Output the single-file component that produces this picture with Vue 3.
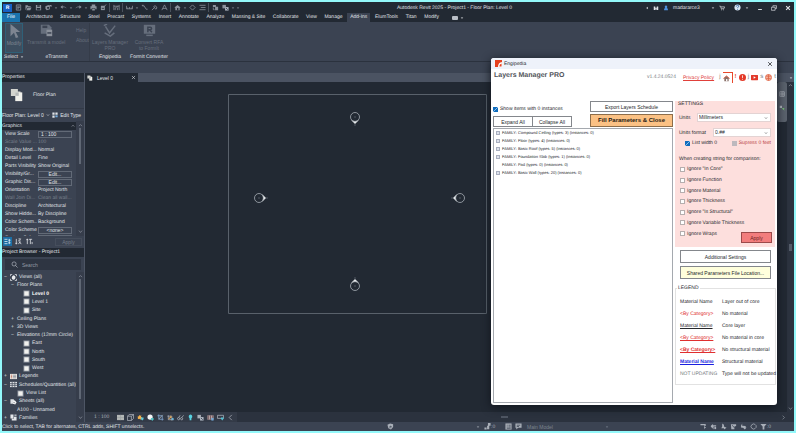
<script setup>
import { h, ref } from 'vue'

// Each glyph is a list of [path, fill, stroke] on a 16 x 16 grid.
const C = 'currentColor'
const N = 'none'
const glyphs = {
  recent: [['M3 2h10v12H3z', N, C], ['M5 5h6M5 8h6M5 11h4', N, C]],
  open: [['M1 3h5l2 2h5v2H5l-3 6H1z', C, N], ['M6 8h9l-3 6H3z', C, N]],
  save: [['M2 2h11l1 1v11H2z', C, N], ['M5 3h6v3H5zM4 9h8v4H4z', '#222933', N]],
  sync: [['M1 5l7-3 3 3v7l-7 2-3-3z', C, N], ['M10 2h5v5l-2-2-3 2z', C, N], ['M5 7h4v4H5z', '#222933', N]],
  undo: [['M6 3L1 7l5 4V8c4-1 7 0 9 3-1-5-5-6-9-5z', C, N]],
  redo: [['M10 3l5 4-5 4V8c-4-1-7 0-9 3 1-5 5-6 9-5z', C, N]],
  print: [['M4 1h8v4H4zM1 5h14v7h-3V9H4v3H1zM5 10h6v5H5z', C, N]],
  mark: [['M2 4h9v10H2z', C, N], ['M8 8l6-7', N, C], ['M4 10h5', N, '#222933']],
  measure: [['M2 2v12M14 2v12M2 5h12M5 9l6-4M5 9v5M10 8v6', N, C]],
  dim: [['M1 4v7h14V4M4 11V8M8 11V7M12 11V8', N, C]],
  line: [['M2 3h4l6 9h3M3 3l2 3', N, C]],
  tag: [['M2 14L8 8M6 6a4 4 0 1 1 5 6z', N, C]],
  text: [['M2 14L8 2l6 12M4 10h8', N, C]],
  house3d: [['M1 8l7-6 7 6-2 1v5H3V9z', C, N], ['M7 9h3v5H7z', '#222933', N]],
  diamond: [['M8 2l6 6-6 6-6-6z', N, C]],
  lines: [['M1 3h14M4 8h11M1 13h14', N, C]],
  close: [['M3 3l10 10M13 3L3 13', N, C]],
  windows: [['M2 2h7v5H2zM7 6h7v8H7z', C, N], ['M3 8v5h3', N, C]],
  caret: [['M3 6h10l-5 5z', C, N]],
  left: [['M11 3v10L5 8z', C, N]],
  chevron: [['M3 5l5 6 5-6', N, C]],
  up: [['M3 10l5-5 5 5', N, C]],
  right: [['M5 2l6 6-6 6', N, C]],
  back: [['M11 2L5 8l6 6', N, C]],
  binoc: [['M2 4h4v3h4V4h4v9h-5V9H7v4H2z', C, N]],
  user: [['M8 1a4 4 0 0 1 2 7l3 2v4H3v-4l3-2a4 4 0 0 1 2-7z', '#4d91dd', N]],
  cart: [['M1 3h3l2 7h7l2-5H5', N, C], ['M6 12h2v2H6zM11 12h2v2h-2z', C, N]],
  help: [['M8 1a7 7 0 1 1 0 14A7 7 0 0 1 8 1z', '#dbe8f5', N], ['M5 6c0-4 6-4 6-1 0 2-3 2-3 4M8 11v2', N, '#245b9c']],
  min: [['M3 12h10', N, C]],
  restore: [['M5 5V2h10v7h-4M1 6h10v8H1z', N, C]],
  cursor: [['M4 0v14l4-4 2 6 3-1-3-6h5z', C, N]],
  transmit: [['M1 1h10l3 3v8H1z', C, N], ['M3 2h6v3H3z', '#3b4352', N], ['M8 7h7v8H8z', '#8b919b', N], ['M9 11h5', N, '#3b4352']],
  layers: [['M3 3l5 8 7-9', N, C], ['M1 2l4-2M2 11l7 4 5-4', N, C]],
  formit: [['M1 1h14v11H1z', C, N], ['M6 10V4h3c2 0 2 3 0 3H6M8 7l3 3', N, '#3b4352'], ['M4 14h8', N, C]],
  plan: [['M1 1h8v3h3v8H9V9H1z', '#d3d4cf', N], ['M6 5h8v10H6z', '#f0f0eb', N], ['M6 5h4v4H6z', '#b5b8b8', N]],
  edittype: [['M1 1h6v6H1zM9 1h6v6H9zM1 9h6v6H1z', C, N], ['M9 9h6v5H9z', '#75aee0', N]],
  filter: [['M1 3h7M1 8h7M1 13h7', N, '#e8f3fb'], ['M10 5h5M10 11h5M12 2v12', N, '#e8f3fb']],
  sortaz: [['M3 2v12M1 11l2 3 2-3M8 2h5L8 7h5M8 14l3-5 3 5', N, C]],
  sorttype: [['M3 14V2M1 5l2-3 2 3M7 3h7M10 3v11M14 9v5', N, C]],
  search: [['M7 2a4.500 4.500 0 1 1 0 9.500A4.500 4.500 0 0 1 7 2zM10 10l5 5', N, C]],
  views: [['M1 5V1h4M11 1h4v4M15 11v4h-4M5 15H1v-4', N, C], ['M8 3a5 5 0 1 1-1 10C3 12 3 5 8 3z', '#e9ebee', N]],
  view: [['M1 1h14v14H1z', '#8a919b', N], ['M3 3h10v10H3z', '#f1f1ee', N]],
  legends: [['M0 2h16v12H0z', '#e7e4df', N], ['M2 5h3M2 8h3M2 11h3', N, '#bd6c55'], ['M7 5h7M7 8h7M7 11h7', N, '#8a919b']],
  schedule: [['M0 2h16v12H0z', '#dfe2e6', N], ['M0 6h16M0 10h16M5 2v12M11 2v12', N, '#4e5663']],
  sheets: [['M1 3h7l3 3v7H1z', '#dfe2e6', N], ['M7 7l5-1 3 4-3 5-5-2z', '#f5f5f5', N], ['M8 9l3 3', N, '#4e5663']],
  families: [['M1 1h7v9H1zM9 6h6v9H4v-4h5z', '#e3e6ea', N], ['M10 1h5v4h-5z', '#aab0b9', N]],
  scale: [['M0 2h16v12H0z', '#b3b7b6', N], ['M0 8h16M8 2v12', N, '#a0a5a6']],
  box: [['M1 5h9v10H1zM1 5l4-4h10L10 5M15 1v9l-5 5', N, C]],
  sun: [['M5 2l2 2 3-1-1 3 3 2-3 2-1 3-3-2-3 1V8L1 6l3-1z', '#f3b14d', N], ['M9 8h6v4l-3 3-3-3z', '#62c7d8', N]],
  shadow: [['M7 1a6 6 0 1 1 0 12A6 6 0 0 1 7 1z', '#f3f5f7', N], ['M9 9h6v3l-3 4-3-4z', '#52c2c5', N]],
  crop: [['M4 1v11h11M1 4h11v11', N, '#80a7d1'], ['M4 12L13 2', N, C]],
  cropview: [['M3 3v10h12M1 5h10v10', N, C], ['M2 13l7-10 2 5z', '#d5a25b', N], ['M11 9h4v5h-4z', '#67b8dd', N]],
  glasses: [['M1 11c0-4 5-4 5 0s-5 2-5 0M8 11c0-4 5-4 5 0s-5 2-5 0M4 8l3-5M11 8l4-5', N, C]],
  bulb: [['M8 1a5 5 0 0 1 2 9v4H6v-4a5 5 0 0 1 2-9z', '#58d1e0', N]],
  props: [['M1 2h8v8H1z', C, N], ['M7 7h8v8H7z', '#aeb6c1', N], ['M9 9l4 4', N, '#2e3542']],
  analytic: [['M1 3h14v10H1z', '#b6a3a3', N], ['M3 3v10M8 3v10M13 3v10', N, '#684b52'], ['M10 9h5v6h-5z', '#6fa8d8', N]],
  constraint: [['M1 3h14v7H1z', N, C], ['M9 8h6v3l-3 4-3-4z', '#53bfd2', N]],
  cube: [['M1 4l6-3 7 2v6l-5 6-6-3z', C, N], ['M7 7l4 2M7 7v5', N, '#3b4352']],
  worker: [['M9 0h6v6H9zM7 6h5v8H7zM1 10h5v5H1z', C, N]],
  panel: [['M1 1h14v14H1z', C, N], ['M4 5h2M8 5h5M4 9h2M8 9h5M4 12h9', N, '#3b4352']],
  bubble: [['M1 1h14v10H7l-4 4v-4H1z', C, N], ['M4 5h8M4 8h5', N, '#3b4352']],
  selA: [['M1 2h12v5h-3V5H1z', C, N], ['M9 7l5 4-3 1-1 3z', C, N]],
  selB: [['M2 6l5-4v3h7v3H8v7L5 11 2 9z', C, N], ['M10 9h4v5h-4z', C, N]],
  selC: [['M5 1l4 3v4l6 3-6 4v-3H3l2-4z', C, N]],
  selD: [['M2 3h12v4l-4 1v6H3z', C, N], ['M5 5l5 6', N, '#3b4352']],
  selE: [['M5 1v5l8 1v3h2l-4 5-4-4H3l-1-4z', C, N]],
  gear: [['M8 2l3 1 3 3v4l-3 3-3 1-4-2-2-4 2-4z', N, C]],
  funnel: [['M1 2h14L10 8v7H6V8z', C, N]],
  wheel: [['M2 2h12v12H2z', N, C], ['M8 2v12M2 8h12', N, C]],
  zoomnav: [['M2 2h6v6H2z', C, N], ['M8 8l6 6', N, '#6bc06e'], ['M10 8h4v4h-4z', '#78b878', N]],
  engi: [['M0 0h16v16H0z', '#e6401f', N], ['M16 5c-7 0-9 5-9 11h9z', '#ffffff', N], ['M10 15c0-4 2-6 5-7v7z', '#e6401f', N]],
  engihome: [['M1 8l7-6 7 6h-2v6H3V8z', '#8a7069', N], ['M1 8l7-6 7 6', N, '#e2553a'], ['M7 9h3v5H7z', '#fff', N]],
  info: [['M8 0a8 8 0 1 1 0 16A8 8 0 0 1 8 0z', '#e43a28', N], ['M8 3v6M8 11v2', N, '#fff']],
  tube: [['M1 2h14l1 1v10l-1 1H1l-1-1V3z', '#e23a2b', N], ['M6 5l5 3-5 3z', '#fff', N]],
  globe: [['M8 1a7 7 0 1 1 0 14A7 7 0 0 1 8 1z', '#f6b9a4', '#df6243'], ['M8 1v14M3 5h10M3 10h10', N, '#df6243']],
}
const Icon = (p) =>
  h('svg', { viewBox: '0 0 16 16', width: p.s || 8, height: p.s || 8, 'aria-hidden': 'true' },
    glyphs[p.n].map(([d, fill, stroke]) => h('path', { d, fill, stroke, 'stroke-width': p.w || 1.8 })))
Icon.props = ['n', 's', 'w']

const quick = ['recent', 'open', 'save', 'sync', 'caret', 'undo', 'caret', 'redo', 'caret', 'print', 'mark', '|', 'measure', '|', 'dim', 'caret', 'line', 'tag', 'text', '|', 'house3d', 'caret', 'diamond', 'lines', '|', 'windows', 'props', 'caret', 'caret']
const tabs = ['Architecture', 'Structure', 'Steel', 'Precast', 'Systems', 'Insert', 'Annotate', 'Analyze', 'Massing & Site', 'Collaborate', 'View', 'Manage', 'Add-Ins', 'ElumTools', 'Titan', 'Modify']

const properties = [
  ['View Scale', '1 : 100', 'field'],
  ['Scale Value ...', '100', 'off'],
  ['Display Mod...', 'Normal'],
  ['Detail Level', 'Fine'],
  ['Parts Visibility', 'Show Original'],
  ['Visibility/Gr...', 'Edit...', 'button'],
  ['Graphic Dis...', 'Edit...', 'button'],
  ['Orientation', 'Project North'],
  ['Wall Join Di...', 'Clean all wall...', 'off'],
  ['Discipline', 'Architectural'],
  ['Show Hidde...', 'By Discipline'],
  ['Color Schem...', 'Background'],
  ['Color Scheme', '<none>', 'button'],
  ['System Colo...', 'Edit...', 'button'],
]
const browser = [
  { t: 'Views (all)', l: 0, e: '−', i: 'views' },
  { t: 'Floor Plans', l: 1, e: '−' },
  { t: 'Level 0', l: 2, i: 'view', b: true },
  { t: 'Level 1', l: 2, i: 'view' },
  { t: 'Site', l: 2, i: 'view' },
  { t: 'Ceiling Plans', l: 1, e: '+' },
  { t: '3D Views', l: 1, e: '+' },
  { t: 'Elevations (12mm Circle)', l: 1, e: '−' },
  { t: 'East', l: 2, i: 'view' },
  { t: 'North', l: 2, i: 'view' },
  { t: 'South', l: 2, i: 'view' },
  { t: 'West', l: 2, i: 'view' },
  { t: 'Legends', l: 0, e: '+', i: 'legends' },
  { t: 'Schedules/Quantities (all)', l: 0, e: '−', i: 'schedule' },
  { t: 'View List', l: 3, i: 'view' },
  { t: 'Sheets (all)', l: 0, e: '−', i: 'sheets' },
  { t: 'A100 - Unnamed', l: 4 },
  { t: 'Families', l: 0, e: '+', i: 'families' },
]
const viewTools = ['scale', 'box', 'sun', 'shadow', 'crop', 'cropview', 'glasses', 'bulb', 'props', 'analytic', 'constraint', 'back']
const markers = [
  { x: 270, y: 35, r: 90 },
  { x: 174, y: 116, r: 0 },
  { x: 375, y: 116, r: 180 },
  { x: 270, y: 204, r: 270 },
]
const families = [
  'FAMILY: Compound Ceiling (types: 3) (instances: 0)',
  'FAMILY: Floor (types: 4) (instances: 0)',
  'FAMILY: Basic Roof (types: 5) (instances: 0)',
  'FAMILY: Foundation Slab (types: 1) (instances: 0)',
  'FAMILY: Pad (types: 0) (instances: 0)',
  'FAMILY: Basic Wall (types: 20) (instances: 0)',
]
const ignore = ['Ignore "In Core"', 'Ignore Function', 'Ignore Material', 'Ignore Thickness', 'Ignore "Is Structural"', 'Ignore Variable Thickness', 'Ignore Wraps']
const legend = [
  ['Material Name', 'Layer out of core', ''],
  ['<By Category>', 'No material', 'red'],
  ['Material Name', 'Core layer', 'line'],
  ['<By Category>', 'No material in core', 'red line'],
  ['<By Category>', 'No structural material', 'red line bold'],
  ['Material Name', 'Structural material', 'blue line bold'],
  ['NOT UPDATING', 'Type will not be updated', 'grey'],
]
const showEmpty = ref(true)
const listZero = ref(true)
</script>

<template>
  <div class="app">
    <header class="titlebar">
      <div class="quick">
        <span class="logo">R</span>
        <template v-for="(q, i) in quick" :key="i">
          <span v-if="q === '|'" class="sep"></span>
          <button v-else :class="q === 'caret' ? 'drop' : 'tool'" :aria-label="q"><Icon :n="q" :s="q === 'caret' ? 4 : 7" /></button>
        </template>
      </div>
      <h1>Autodesk Revit 2025 - Project1 - Floor Plan: Level 0</h1>
      <div class="account">
        <Icon n="left" s="4" /><Icon n="binoc" s="6" /><Icon n="user" s="6" />
        <span class="name">madararce3</span>
        <Icon n="caret" s="4" /><Icon n="cart" s="6" class="cart" /><Icon n="help" s="7" /><Icon n="caret" s="4" />
        <button class="win" aria-label="Minimize"><Icon n="min" s="6" w="2.500" /></button>
        <button class="win" aria-label="Restore"><Icon n="restore" s="6" /></button>
        <button class="win" aria-label="Close"><Icon n="close" s="6" w="3" /></button>
      </div>
    </header>

    <nav class="tabs">
      <a href="#file" class="file">File</a>
      <div class="tablist">
        <a v-for="t in tabs" :key="t" href="#tab" :class="{ on: t === 'Add-Ins' }">{{ t }}</a>
      </div>
      <span class="pill"></span><Icon n="caret" s="4" />
    </nav>

    <section class="ribbon">
      <div class="group select">
        <button class="big modify"><Icon n="cursor" s="14" />Modify</button>
        <span class="caption">Select <Icon n="caret" s="4" /></span>
      </div>
      <div class="group etransmit">
        <div class="pair">
          <button class="big"><Icon n="transmit" s="13" />Transmit a model</button>
          <div class="small"><button>Help</button><button>About</button></div>
        </div>
        <span class="caption">eTransmit</span>
      </div>
      <div class="group engi">
        <button class="big"><Icon n="layers" s="13" />Layers Manager<br />PRO</button>
        <span class="caption">Engipedia</span>
      </div>
      <div class="group formit">
        <button class="big"><Icon n="formit" s="13" />Convert RFA<br />to FormIt</button>
        <span class="caption">FormIt Converter</span>
      </div>
    </section>
    <div class="options"></div>

    <div class="work">
      <aside>
        <h2>Properties</h2>
        <div class="type"><Icon n="plan" s="14" /><span>Floor Plan</span></div>
        <div class="instance">
          <button class="which">Floor Plan: Level 0 <Icon n="chevron" s="4" /></button>
          <button class="edit"><Icon n="edittype" s="6" />Edit Type</button>
        </div>
        <div class="grid">
          <div class="rows">
            <h3>Graphics<Icon n="up" s="4" /></h3>
            <table>
              <tbody>
                <tr v-for="p in properties" :key="p[0]" :class="p[2]">
                  <th scope="row">{{ p[0] }}</th>
                  <td>
                    <button v-if="p[2] === 'button'">{{ p[1] }}</button>
                    <input v-else-if="p[2] === 'field'" :value="p[1]" :aria-label="p[0]" />
                    <template v-else>{{ p[1] }}</template>
                  </td>
                </tr>
              </tbody>
            </table>
          </div>
          <div class="scroll"><Icon n="up" s="5" /><i class="thumb"></i><Icon n="chevron" s="5" /></div>
        </div>
        <div class="sorts">
          <button class="active" aria-label="Group by category"><Icon n="filter" s="7" /></button>
          <button aria-label="Sort ascending"><Icon n="sortaz" s="7" /></button>
          <button aria-label="Sort by type"><Icon n="sorttype" s="7" /></button>
          <button class="apply">Apply</button>
        </div>
        <h2>Project Browser - Project1</h2>
        <label class="search"><Icon n="search" s="7" w="1.500" /><input type="search" placeholder="Search" aria-label="Search" /></label>
        <div class="tree">
          <ul>
            <li v-for="b in browser" :key="b.t" :class="['l' + b.l, { strong: b.b }]">
              <span class="exp">{{ b.e }}</span><Icon v-if="b.i" :n="b.i" s="7" />{{ b.t }}
            </li>
          </ul>
          <div class="scroll"><Icon n="up" s="5" /><i class="thumb long"></i><Icon n="chevron" s="5" /></div>
        </div>
      </aside>

      <main>
        <div class="doctabs">
          <button class="doc"><Icon n="plan" s="6" /><span>Level 0</span><Icon n="close" s="5" /></button>
          <Icon n="caret" s="4" />
        </div>
        <div class="view">
          <div class="canvas">
            <svg class="drawing" width="420" height="240" viewBox="0 0 420 240" role="img" aria-label="Level 0 elevation markers">
              <path d="M143.500 12.500h258v219h-258z" fill="none" stroke="#59616b" />
              <g v-for="m in markers" :key="m.x + '-' + m.y" :transform="`translate(${m.x} ${m.y}) rotate(${m.r})`">
                <path d="M3 -4L7 0L3 4Q5 0 3 -4z" fill="#e4e7ea" />
                <circle r="4.500" fill="none" stroke="#a7adb5" stroke-width="0.800" />
                <path d="M-0.500 0h1M7.500 0h1" stroke="#7d858f" />
              </g>
            </svg>
            <div class="navbar"><Icon n="wheel" s="6" /><Icon n="zoomnav" s="6" /></div>
          </div>
          <div class="vscroll"><Icon n="up" s="5" /><i></i><Icon n="chevron" s="5" /></div>
        </div>
        <div class="viewbar">
          <div class="vtools"><span>1 : 100</span><Icon v-for="v in viewTools" :key="v" :n="v" s="7" /></div>
          <div class="hscroll"><i></i><Icon n="right" s="5" /></div>
        </div>
      </main>
    </div>

    <footer>
      <span class="hint">Click to select, TAB for alternates, CTRL adds, SHIFT unselects.</span>
      <div class="sets">
        <Icon n="cube" s="7" /><Icon n="caret" s="4" class="push" /><span class="count"><Icon n="worker" s="7" />:0</span>
      </div>
      <div class="model"><Icon n="panel" s="7" /><Icon n="bubble" s="7" /><button>Main Model <Icon n="caret" s="4" /></button></div>
      <div class="selects">
        <Icon v-for="s in ['selA', 'selB', 'selC', 'selD', 'selE', 'gear']" :key="s" :n="s" s="7" />
        <span class="count"><Icon n="funnel" s="7" />:0</span>
      </div>
    </footer>

    <section class="dialog" role="dialog" aria-label="Engipedia">
      <header class="dtitle"><Icon n="engi" s="7" /><span>Engipedia</span><button aria-label="Close dialog"><Icon n="close" s="6" w="2" /></button></header>
      <div class="dhead">
        <h2>Layers Manager PRO</h2>
        <span class="version">v1.4.24.0524</span>
        <a href="#privacy">Privacy Policy</a>
        <div class="links">
          <span>j</span>
          <a href="#home" class="house" aria-label="Home"><Icon n="engihome" s="7" /></a>
          <b>!</b>
          <a href="#info" aria-label="Info"><Icon n="info" s="7" /></a>
          <span>j</span>
          <a href="#video" aria-label="Videos"><Icon n="tube" s="7" /></a>
          <span>s</span>
          <a href="#web" aria-label="Website"><Icon n="globe" s="7" /></a>
          <span>t</span>
        </div>
      </div>
      <div class="dbody">
        <div class="left">
          <div class="actions">
            <div class="opts">
              <label class="tick"><input v-model="showEmpty" type="checkbox" />Show items with 0 instances</label>
              <div class="both"><button>Expand All</button><button>Collapse All</button></div>
            </div>
            <div class="main">
              <button>Export Layers Schedule</button>
              <button class="fill">Fill Parameters &amp; Close</button>
            </div>
          </div>
          <ul class="list">
            <li v-for="(f, i) in families" :key="f"><i :class="{ leaf: i === 4 }"></i>{{ f }}</li>
          </ul>
        </div>
        <div class="side">
          <section class="settings">
            <h3>SETTINGS</h3>
            <div class="row"><label for="units">Units</label><div class="sel wide"><select id="units"><option>Millimeters</option></select><Icon n="chevron" s="4" w="1.500" /></div></div>
            <div class="row"><label for="format">Units format</label><div class="sel"><select id="format"><option>0.##</option></select><Icon n="chevron" s="4" w="1.500" /></div></div>
            <div class="zero">
              <label class="tick"><input v-model="listZero" type="checkbox" />List width 0</label>
              <label class="tick off"><input type="checkbox" checked disabled />Supress 0 feet</label>
            </div>
            <p>When creating string for comparison:</p>
            <div class="ignores">
              <label v-for="g in ignore" :key="g" class="tick"><input type="checkbox" />{{ g }}</label>
              <button>Apply</button>
            </div>
          </section>
          <button class="wide">Additional Settings</button>
          <button class="wide yellow">Shared Parameters File Location...</button>
          <fieldset>
            <legend>LEGEND</legend>
            <table>
              <tbody>
                <tr v-for="l in legend" :key="l[1]"><td><span :class="l[2]">{{ l[0] }}</span></td><td>{{ l[1] }}</td></tr>
              </tbody>
            </table>
          </fieldset>
        </div>
      </div>
    </section>
  </div>
</template>

<style>
body { margin: 0; }
</style>

<style scoped>
* { box-sizing: border-box; }
.app {
  position: relative; display: flex; flex-direction: column; height: 100vh; overflow: hidden;
  border: 2px solid #93f8fa; background: #3b4352; color: #e0e3e8;
  font: 5px/8px "Liberation Sans", Arial, sans-serif; text-rendering: geometricPrecision;
}
.app :deep(svg) { flex: none; display: block; }
button, input, select { margin: 0; padding: 0; border: 0; border-radius: 0; background: none; color: inherit; font: inherit; appearance: none; }
h1, h2, h3, p, ul { margin: 0; padding: 0; font: inherit; list-style: none; }
a { color: inherit; text-decoration: none; white-space: nowrap; }
button, span, label, li { white-space: nowrap; }

.titlebar { display: flex; align-items: center; flex: none; height: 11px; background: #222933; }
.quick { display: flex; align-items: center; flex: none; width: 395px; color: #8b929c; }
.logo { width: 9px; margin: 0 1px; background: #1762c4; color: #fff; font-weight: 700; text-align: center; }
.tool { display: grid; place-items: center; width: 10px; height: 9px; }
.drop { display: grid; place-items: center; width: 5px; height: 9px; }
.sep { width: 1px; height: 9px; margin: 0 1px; background: #4a515c; }
.titlebar h1 { flex: 1; white-space: nowrap; }
.account { display: flex; align-items: center; gap: 4px; padding-right: 3px; }
.name { width: 34px; }
.cart { margin-right: 5px; }
.win { margin-left: 4px; }

.tabs { display: flex; align-items: center; flex: none; height: 9px; background: #222933; }
.tabs a { padding: 0 3px; line-height: 9px; }
.tabs .file { width: 18px; margin-right: 3px; padding: 0; background: #1a73ad; text-align: center; color: #fff; }
.tablist { display: flex; justify-content: space-between; flex: none; width: 419px; }
.tabs .on { background: #3b4352; }
.pill { width: 6px; height: 4px; margin: 0 2px 0 10px; border-radius: 1px; background: #b9bec6; }

.ribbon { display: flex; flex: none; height: 40px; padding: 1px 0 0 2px; border-bottom: 1px solid #2b323e; }
.group { display: flex; flex-direction: column; align-items: center; justify-content: space-between; color: #666e7c; }
.select { width: 20px; }
.etransmit { width: 65px; }
.engi { width: 41px; border-left: 1px solid #353c49; }
.formit { width: 38px; }
.big { display: flex; flex-direction: column; align-items: center; gap: 2px; height: 30px; line-height: 6px; padding-top: 1px; }
.modify { width: 18px; border: 1px solid #2f6078; background: #3d4e5f; color: #7d8591; padding: 0; }
.pair { display: flex; width: 100%; justify-content: space-between; padding: 0 0 0 3px; }
.small { display: flex; flex-direction: column; gap: 3px; padding-top: 4px; }
.small button { text-align: left; line-height: 7px; }
.caption { display: flex; align-items: center; gap: 2px; color: #e2e5e9; }
.options { flex: none; height: 11px; }

.work { display: flex; flex: 1; min-height: 0; }
aside { display: flex; flex-direction: column; flex: none; width: 83px; border-right: 1px solid #4e5665; }
aside h2 { flex: none; height: 9px; background: #222933; color: #e6e8ec; }
.type { display: flex; align-items: center; gap: 9px; flex: none; height: 27px; padding-left: 8px; border-bottom: 1px solid #333a47; }
.instance { display: flex; align-items: center; justify-content: space-between; flex: none; height: 12px; padding-right: 3px; }
.which, .edit { display: flex; align-items: center; gap: 2px; }
.grid { display: flex; flex: none; height: 115px; overflow: hidden; }
.rows { flex: 1; min-width: 0; overflow: hidden; }
.rows h3 { display: flex; align-items: center; justify-content: space-between; height: 8px; margin-top: 1px; padding-right: 1px; background: #222933; }
table { border-collapse: collapse; }
.rows table { width: 100%; table-layout: fixed; }
.rows th, .rows td { height: 8px; padding: 0; font-weight: 400; text-align: left; white-space: nowrap; overflow: hidden; line-height: 7px; }
.rows th { width: 35px; padding-left: 3px; }
.rows td { padding-left: 1px; }
.rows .off { color: #7a818d; }
.rows td button, .rows td input { display: block; width: 34px; height: 7px; border: 1px solid #626a77; line-height: 5px; }
.rows td input { padding-left: 2px; }
.scroll { display: flex; flex-direction: column; align-items: center; flex: none; width: 8px; color: #a2a8b2; padding: 2px 0; background: #363d4b; }
.thumb { width: 2px; height: 36px; margin-bottom: auto; background: #5f6774; }
.thumb.long { height: auto; flex: 1; margin-bottom: 16px; }
.sorts { display: flex; align-items: center; gap: 2px; flex: none; height: 12px; padding: 0 2px 1px 1px; }
.sorts button { padding: 1px; }
.sorts .active { background: #1c6ea4; }
.sorts .apply { width: 27px; height: 8px; margin-left: auto; padding: 0; border: 1px solid #464e5c; color: #767e8a; line-height: 6px; }
.search { display: flex; align-items: center; gap: 4px; flex: none; height: 11px; margin: 2px 3px; padding-left: 6px; background: #2e3542; color: #b6bbc4; }
.search input { flex: 1; min-width: 0; }
.search input::placeholder { color: #9299a4; opacity: 1; }
.tree { display: flex; flex: 1; min-height: 0; }
.tree ul { display: grid; grid-auto-rows: 1fr; flex: 1; min-width: 0; padding-top: 1px; }
.tree li { display: flex; align-items: center; gap: 2px; min-height: 0; }
.exp { width: 5px; text-align: center; }
.l0 { padding-left: 1px; }
.l1 { padding-left: 8px; }
.l2 { padding-left: 14px; }
.l3, .l4 { padding-left: 8px; }
.strong { font-weight: 700; color: #fff; }

main { display: flex; flex-direction: column; flex: 1; min-width: 0; background: #222933; }
.doctabs { display: flex; align-items: center; justify-content: space-between; flex: none; height: 9px; padding-right: 1px; background: #4b5362; }
.doc { display: flex; align-items: center; gap: 4px; width: 53px; height: 9px; padding: 0 2px; background: #222933; }
.doc span { margin-right: auto; }
.view { display: flex; flex: 1; min-height: 0; }
.canvas { position: relative; flex: 1; min-width: 0; overflow: hidden; }
.drawing { position: absolute; left: 0; top: 0; }
.navbar { position: absolute; right: 0; top: 0; display: flex; flex-direction: column; align-items: center; gap: 8px; width: 10px; height: 40px; padding-top: 9px; border-radius: 2px; background: #5b626d; color: #b6bbc2; }
.vscroll, .hscroll { display: flex; align-items: center; justify-content: space-between; background: #2b323e; color: #a5abb4; }
.vscroll { flex-direction: column; flex: none; width: 7px; padding: 1px 0; }
.vscroll i { width: 3px; height: 7px; background: #545c69; }
.viewbar { display: flex; flex: none; height: 10px; }
.vtools { display: flex; align-items: center; gap: 3px; padding: 0 3px 0 9px; background: #333a47; color: #a9afb8; }
.vtools span { width: 20px; }
.hscroll { flex: 1; padding-right: 8px; }
.hscroll i { width: 7px; height: 2px; margin-left: 48%; background: #4e5663; }

footer { display: flex; align-items: center; flex: none; height: 9px; color: #a9afb8; }
.hint { flex: none; width: 385px; color: #e0e3e8; }
.sets { display: flex; align-items: center; width: 118px; }
.push { margin-left: 82px; }
.count { display: flex; align-items: center; margin-left: 4px; }
.model { display: flex; align-items: center; gap: 3px; flex: 1; }
.model button { display: flex; align-items: center; justify-content: space-between; width: 84px; padding-left: 2px; color: #7b838f; }
.selects { display: flex; align-items: center; gap: 3px; padding-right: 23px; }
.selects .count { margin: 0; }

.dialog {
  position: absolute; top: 56px; right: 17px; display: flex; flex-direction: column; width: 286px; height: 347px; padding-bottom: 2px;
  border-radius: 3px; overflow: hidden; background: #fff; color: #26282c; box-shadow: 0 2px 10px #10151d;
}
.dtitle { display: flex; align-items: center; gap: 2px; flex: none; height: 11px; padding: 0 4px; background: #eef2fa; }
.dtitle span { flex: 1; }
.dhead { display: flex; align-items: flex-start; flex: none; height: 32px; padding: 2px 0 0 3px; }
.dhead h2 { width: 153px; color: #505359; font-weight: 700; font-size: 7px; line-height: 9px; }
.version { width: 36px; padding-top: 2px; color: #777b80; }
.dhead > a { padding-top: 3px; color: #e0403a; text-decoration: underline; }
.links { display: flex; align-items: center; justify-content: space-between; flex: 1; height: 12px; padding: 0 1px 0 5px; color: #777b80; font-size: 6px; }
.links .house { width: 10px; padding: 2px 0 1px; border-top: 1px solid #e8482c; border-right: 1px solid #e8482c; }
.links b { color: #e8482c; }
.dbody { display: grid; grid-template-columns: 1fr 101px; gap: 2px; flex: 1; min-height: 0; padding: 0 1px 0 2px; }
.left { display: flex; flex-direction: column; gap: 1px; min-width: 0; }
.actions { display: flex; justify-content: space-between; height: 26px; }
.opts { display: flex; flex-direction: column; justify-content: flex-end; gap: 3px; }
.both { display: flex; width: 78px; }
.both button { flex: 1; height: 11px; margin-right: -1px; }
.dbody button { border: 1px solid #84878c; background: #fff; line-height: 8px; }
.main { display: flex; flex-direction: column; gap: 2px; width: 83px; }
.main button { height: 11px; }
.dbody .main .fill { height: 13px; background: #fbc184; border-color: #8d6d4a; color: #1f1a14; font-weight: 700; font-size: 6px; line-height: 9px; }
.tick { display: flex; align-items: center; gap: 2px; }
.tick input { display: block; width: 5px; height: 5px; border: 1px solid #b5aeae; background: #fff; }
.tick input:checked { border: 0; background: linear-gradient(135deg, #0f6cbd 45%, #8fc0ea 45% 55%, #0f6cbd 55%); }
.tick input:disabled:checked { background: #bdb9be; }
.list { flex: 1; padding: 0 2px; border: 1px solid #a5a9af; font-size: 4px; }
.list li { display: flex; align-items: center; gap: 2px; height: 8px; }
.list i { width: 4px; height: 4px; border: 1px solid #a9afbf; background: #dfe3ec; }
.list .leaf { visibility: hidden; }
.side { display: flex; flex-direction: column; min-width: 0; }
.settings { height: 146px; margin-right: 1px; padding: 0 4px; background: #fddfdd; }
.settings h3 { margin-left: -1px; line-height: 6px; }
.row { display: flex; align-items: center; justify-content: space-between; height: 9px; margin-top: 6px; }
.sel { display: flex; align-items: center; width: 58px; height: 9px; padding-right: 2px; border: 1px solid #e3d3d3; background: #fff; }
.sel.wide { width: 74px; }
.sel select { flex: 1; min-width: 0; height: 7px; padding-left: 1px; line-height: 7px; }
.zero { display: flex; justify-content: space-between; padding: 2px 0 0 6px; }
.zero .off { color: #b8403f; }
.settings p { margin-top: 8px; }
.ignores { position: relative; display: grid; grid-auto-rows: 1fr; height: 75px; margin: 1px 0 0 1px; }
.dbody .ignores button { position: absolute; right: -1px; bottom: -4px; width: 31px; height: 11px; border-color: #9c4a4a; background: #f27d7d; color: #6b1f22; }
.side .wide:not(.sel) { height: 13px; margin: 3px 5px 0; }
.dbody button.yellow { background: #ffffdc; }
fieldset { min-width: 0; margin: 6px 0 0; padding: 5px 0 4px 4px; border: 1px solid #e2e2e2; }
legend { margin-left: -3px; padding: 0 1px; line-height: 6px; }
fieldset td { height: 12px; padding: 0; white-space: nowrap; }
fieldset td:first-child { min-width: 42px; width: 42px; }
.red { color: #e02f2f; }
.line { text-decoration: underline; }
.bold { font-weight: 700; }
.blue { color: #1a1fe0; }
.grey { color: #777b80; }
</style>
